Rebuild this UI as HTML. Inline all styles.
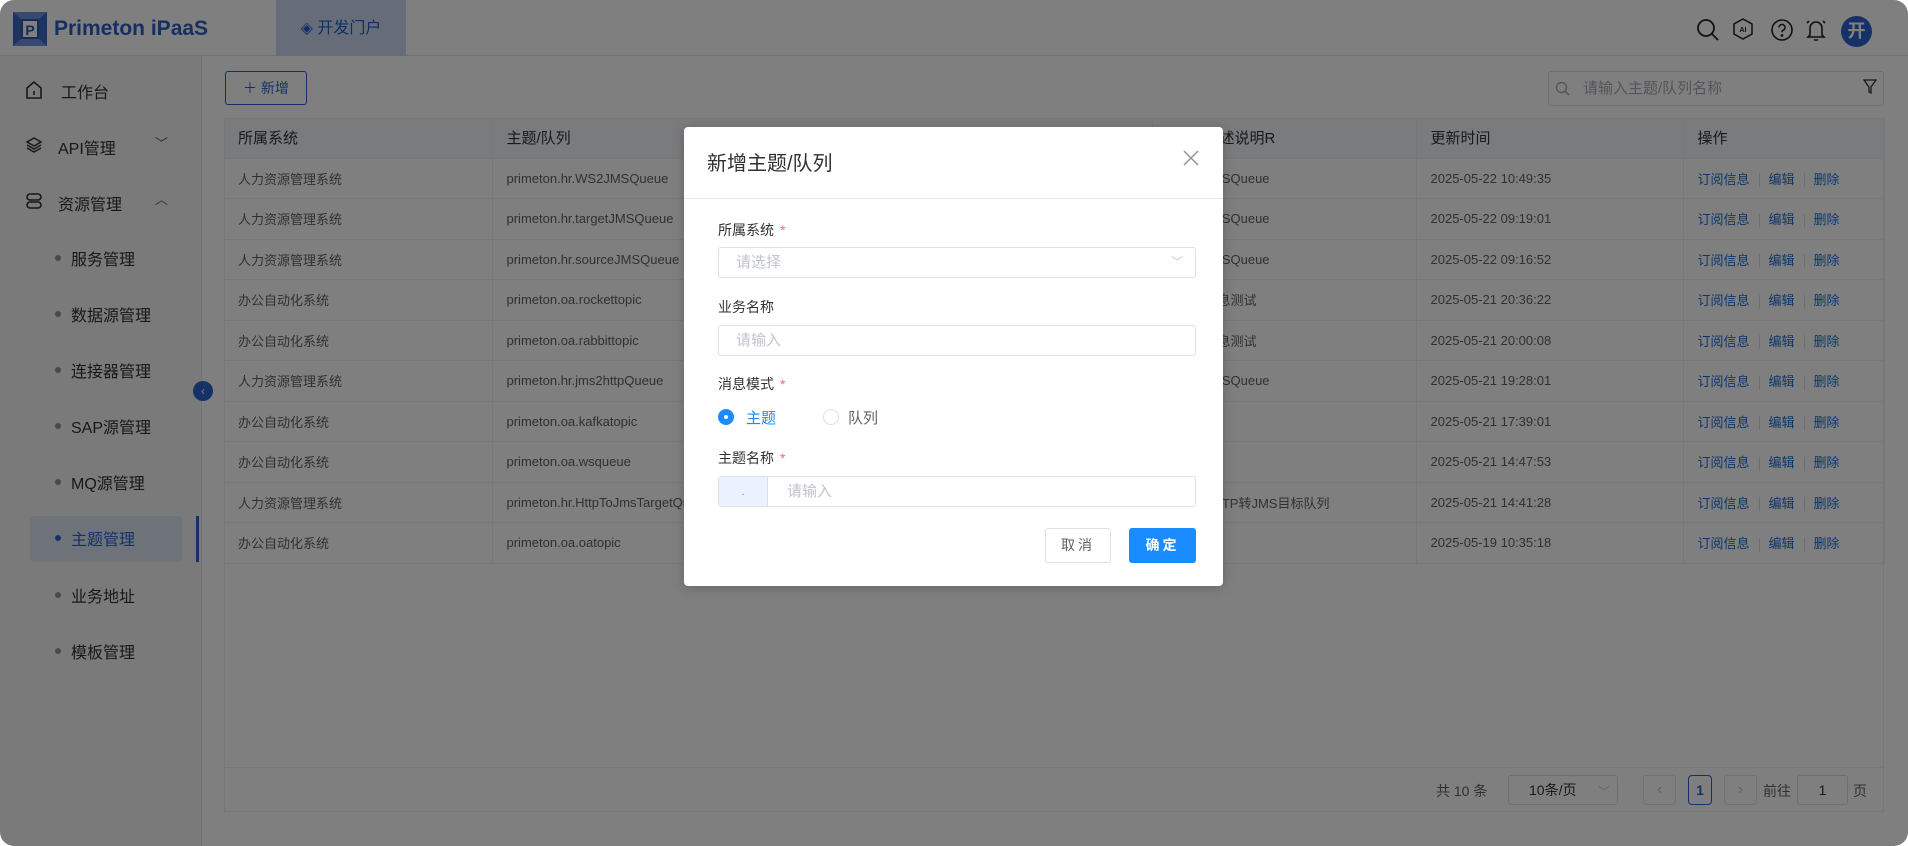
<!DOCTYPE html>
<html><head><meta charset="utf-8"><style>
*{box-sizing:border-box;margin:0;padding:0}
body{width:1908px;height:846px;background:#fff;font-family:"Liberation Sans","Noto Sans CJK SC",sans-serif;overflow:hidden;position:relative}
.page{position:absolute;left:0;top:0;width:1908px;height:846px;background:#fff;border-radius:14px;overflow:hidden}
.a{position:absolute}
.hdr{left:0;top:0;width:1908px;height:56px;background:#fff;border-bottom:1px solid #e4e7ed}
.side{left:0;top:56px;width:202px;height:790px;background:#f4f5f7;border-right:1px solid #e4e7ed}
.main{left:203px;top:56px;width:1705px;height:790px;background:#fff}
.ni{position:absolute;font-size:16px;color:#303133}
.sub{position:absolute;left:71px;font-size:16px;color:#303133}
.dot{position:absolute;left:55px;width:6px;height:6px;border-radius:3px;background:#909399}
table{position:absolute;left:224px;top:118px;border-collapse:collapse;font-size:13px;color:#606266;table-layout:fixed;width:1660px}
td,th{height:40.5px;border-bottom:1px solid #ebeef5;border-right:1px solid #ebeef5;text-align:left;padding-left:14px;font-weight:normal;white-space:nowrap;overflow:hidden}
td.c3{padding-left:52px}
th{height:40px;font-size:15px;color:#303133;background:#f5f7fa}
.lk{color:#1a6fd8}
.sep{display:inline-block;width:1px;height:14px;background:#dcdfe6;margin:0 9px;vertical-align:middle}
.ov{position:absolute;left:0;top:0;width:1908px;height:846px;background:rgba(0,0,0,.5);border-radius:14px}
.modal{position:absolute;left:684px;top:127px;width:539px;height:459px;background:#fff;border-radius:4px;box-shadow:0 2px 12px rgba(0,0,0,.2)}
.lbl{position:absolute;left:34px;font-size:14px;color:#303133}
.lbl i{color:#f56c6c;font-style:normal;margin-left:6px}
.inp{position:absolute;left:34px;width:478px;height:31px;border:1px solid #dcdfe6;border-radius:3px;font-size:15px;color:#c0c4cc;padding-left:17px;line-height:29px}
</style></head><body>
<div class="page">
<div class="a hdr">
  <svg class="a" style="left:12px;top:11px" width="36" height="36" viewBox="0 0 36 36"><rect x="1" y="1" width="34" height="34" fill="#3a66c4"/><polygon points="1,1 35,1 27,8 9,8" fill="#6f93dd"/><polygon points="1,35 35,35 27,28 9,28" fill="#6f93dd"/><rect x="9" y="8" width="18" height="20" fill="#2c56b0"/><rect x="11" y="10" width="14" height="16" fill="#fff"/><text x="18" y="24" font-size="14" font-weight="bold" fill="#2c56b0" text-anchor="middle" font-family="Liberation Sans">P</text></svg>
  <div class="a" style="left:54px;top:17px;font-size:21px;font-weight:bold;color:#2c5fc0">Primeton iPaaS</div>
  <div class="a" style="left:276px;top:0;width:130px;height:56px;background:#cedbf0;color:#1f5fc8;font-size:16px;line-height:58px;text-align:center">◈ 开发门户</div>
  <svg class="a" style="left:1696px;top:18px" width="24" height="24" viewBox="0 0 24 24" fill="none" stroke="#222" stroke-width="1.8"><circle cx="10" cy="10" r="8"/><path d="M16 16l6 6"/></svg>
  <svg class="a" style="left:1731px;top:17px" width="24" height="24" viewBox="0 0 24 24" fill="none" stroke="#222" stroke-width="1.5"><path d="M12 2l9 5v10l-9 5-9-5V7z"/><text x="12" y="15" font-size="7" font-weight="bold" fill="#222" stroke="none" text-anchor="middle" font-family="Liberation Sans">AI</text></svg>
  <svg class="a" style="left:1770px;top:18px" width="24" height="24" viewBox="0 0 24 24" fill="none" stroke="#222" stroke-width="1.6"><circle cx="12" cy="12" r="10"/><path d="M9 9.5a3 3 0 1 1 4 2.8c-.8.4-1 1-1 2"/><circle cx="12" cy="17.5" r=".6" fill="#222"/></svg>
  <svg class="a" style="left:1804px;top:17px" width="24" height="26" viewBox="0 0 24 26" fill="none" stroke="#222" stroke-width="1.6"><path d="M6 18V11a6 6 0 0 1 12 0v7l2 2H4z"/><path d="M10 23h4"/><path d="M3 6l2-2M21 6l-2-2"/></svg>
  <div class="a" style="left:1841px;top:16px;width:31px;height:31px;border-radius:50%;background:#2b63d0;color:#fff;font-size:18px;font-weight:bold;text-align:center;line-height:31px">开</div>
</div>
<div class="a side">
  <svg class="a" style="left:25px;top:24px" width="18" height="20" viewBox="0 0 18 20" fill="none" stroke="#303133" stroke-width="1.6"><path d="M2 8l7-6 7 6v10H2z"/><path d="M9 11v4"/></svg>
  <div class="ni" style="left:61px;top:23px">工作台</div>
  <svg class="a" style="left:25px;top:80px" width="18" height="18" viewBox="0 0 18 18" fill="none" stroke="#303133" stroke-width="1.5"><path d="M9 2l7 4-7 4-7-4z"/><path d="M2 9l7 4 7-4M2 12l7 4 7-4"/></svg>
  <div class="ni" style="left:58px;top:79px">API管理</div>
  <div class="a" style="left:155px;top:77px;color:#606266;font-size:13px">﹀</div>
  <svg class="a" style="left:25px;top:136px" width="18" height="18" viewBox="0 0 18 18" fill="none" stroke="#303133" stroke-width="1.6"><rect x="2" y="2" width="14" height="6" rx="3"/><rect x="2" y="10" width="14" height="6" rx="3"/></svg>
  <div class="ni" style="left:58px;top:135px">资源管理</div>
  <div class="a" style="left:155px;top:133px;color:#606266;font-size:13px">︿</div>
  <div class="dot" style="top:199px"></div><div class="sub" style="top:190px">服务管理</div>
  <div class="dot" style="top:255px"></div><div class="sub" style="top:246px">数据源管理</div>
  <div class="dot" style="top:311px"></div><div class="sub" style="top:302px">连接器管理</div>
  <div class="dot" style="top:367px"></div><div class="sub" style="top:358px">SAP源管理</div>
  <div class="dot" style="top:423px"></div><div class="sub" style="top:414px">MQ源管理</div>
  <div class="a" style="left:30px;top:460px;width:152px;height:46px;background:#dde6f4;border-radius:4px"></div>
  <div class="a" style="left:196px;top:460px;width:3px;height:46px;background:#2b63d0"></div>
  <div class="dot" style="top:479px;background:#2b63d0"></div><div class="sub" style="top:470px;color:#2b63d0">主题管理</div>
  <div class="dot" style="top:536px"></div><div class="sub" style="top:527px">业务地址</div>
  <div class="dot" style="top:592px"></div><div class="sub" style="top:583px">模板管理</div>
</div>
<div class="a main"></div>
<div class="a" style="left:193px;top:381px;width:20px;height:20px;border-radius:50%;background:#2b63d0;color:#fff;font-size:12px;text-align:center;line-height:20px">‹</div>
<div class="a" style="left:225px;top:71px;width:82px;height:34px;border:1px solid #2b63d0;border-radius:3px;color:#2b63d0;font-size:14px;text-align:center;line-height:32px">＋ 新增</div>
<div class="a" style="left:1548px;top:71px;width:336px;height:35px;border:1px solid #dcdfe6;border-radius:3px;color:#a8abb2;font-size:15px;line-height:33px;padding-left:34px">请输入主题/队列名称</div>
<svg class="a" style="left:1555px;top:81px" width="15" height="15" viewBox="0 0 15 15" fill="none" stroke="#a8abb2" stroke-width="1.4"><circle cx="6.5" cy="6.5" r="5"/><path d="M10 10l4 4"/></svg>
<svg class="a" style="left:1863px;top:79px" width="14" height="16" viewBox="0 0 14 16" fill="none" stroke="#303133" stroke-width="1.3"><path d="M1 1h12L8 8v6l-2-1V8z"/></svg>
<table>
<colgroup><col style="width:268px"><col style="width:660px"><col style="width:264px"><col style="width:267px"><col style="width:201px"></colgroup>
<tr><th>所属系统</th><th>主题/队列</th><th style="padding-left:52px">描述说明R</th><th>更新时间</th><th>操作</th></tr>
<tr><td>人力资源管理系统</td><td>primeton.hr.WS2JMSQueue</td><td class="c3">JMSQueue</td><td>2025-05-22 10:49:35</td><td class="lk">订阅信息<span class="sep"></span>编辑<span class="sep"></span>删除</td></tr>
<tr><td>人力资源管理系统</td><td>primeton.hr.targetJMSQueue</td><td class="c3">JMSQueue</td><td>2025-05-22 09:19:01</td><td class="lk">订阅信息<span class="sep"></span>编辑<span class="sep"></span>删除</td></tr>
<tr><td>人力资源管理系统</td><td>primeton.hr.sourceJMSQueue</td><td class="c3">JMSQueue</td><td>2025-05-22 09:16:52</td><td class="lk">订阅信息<span class="sep"></span>编辑<span class="sep"></span>删除</td></tr>
<tr><td>办公自动化系统</td><td>primeton.oa.rockettopic</td><td class="c3">消息测试</td><td>2025-05-21 20:36:22</td><td class="lk">订阅信息<span class="sep"></span>编辑<span class="sep"></span>删除</td></tr>
<tr><td>办公自动化系统</td><td>primeton.oa.rabbittopic</td><td class="c3">消息测试</td><td>2025-05-21 20:00:08</td><td class="lk">订阅信息<span class="sep"></span>编辑<span class="sep"></span>删除</td></tr>
<tr><td>人力资源管理系统</td><td>primeton.hr.jms2httpQueue</td><td class="c3">JMSQueue</td><td>2025-05-21 19:28:01</td><td class="lk">订阅信息<span class="sep"></span>编辑<span class="sep"></span>删除</td></tr>
<tr><td>办公自动化系统</td><td>primeton.oa.kafkatopic</td><td></td><td>2025-05-21 17:39:01</td><td class="lk">订阅信息<span class="sep"></span>编辑<span class="sep"></span>删除</td></tr>
<tr><td>办公自动化系统</td><td>primeton.oa.wsqueue</td><td></td><td>2025-05-21 14:47:53</td><td class="lk">订阅信息<span class="sep"></span>编辑<span class="sep"></span>删除</td></tr>
<tr><td>人力资源管理系统</td><td>primeton.hr.HttpToJmsTargetQueue</td><td class="c3">HTTP转JMS目标队列</td><td>2025-05-21 14:41:28</td><td class="lk">订阅信息<span class="sep"></span>编辑<span class="sep"></span>删除</td></tr>
<tr><td>办公自动化系统</td><td>primeton.oa.oatopic</td><td></td><td>2025-05-19 10:35:18</td><td class="lk">订阅信息<span class="sep"></span>编辑<span class="sep"></span>删除</td></tr>
</table>
<div class="a" style="left:224px;top:118px;width:1660px;height:694px;border:1px solid #ebeef5"></div>
<div class="a" style="left:224px;top:767px;width:1660px;height:1px;background:#ebeef5"></div>
<div class="a" style="left:1436px;top:781px;font-size:14px;color:#606266">共 10 条</div>
<div class="a" style="left:1508px;top:775px;width:110px;height:30px;border:1px solid #dcdfe6;border-radius:3px;font-size:14px;color:#303133;line-height:28px;padding-left:20px">10条/页 <span style="color:#c0c4cc;margin-left:18px;font-size:11px">﹀</span></div>
<div class="a" style="left:1643px;top:775px;width:33px;height:30px;border:1px solid #e4e7ed;border-radius:3px;color:#c0c4cc;text-align:center;line-height:28px">‹</div>
<div class="a" style="left:1688px;top:775px;width:24px;height:30px;border:1px solid #2b63d0;border-radius:4px;color:#2b63d0;text-align:center;line-height:28px;font-weight:bold;font-size:14px">1</div>
<div class="a" style="left:1724px;top:775px;width:33px;height:30px;border:1px solid #e4e7ed;border-radius:3px;color:#c0c4cc;text-align:center;line-height:28px">›</div>
<div class="a" style="left:1763px;top:781px;font-size:14px;color:#606266">前往</div>
<div class="a" style="left:1797px;top:775px;width:51px;height:30px;border:1px solid #dcdfe6;border-radius:3px;text-align:center;line-height:28px;font-size:14px;color:#303133">1</div>
<div class="a" style="left:1853px;top:781px;font-size:14px;color:#606266">页</div>
</div>
<div class="ov"></div>
<div class="modal">
  <div class="a" style="left:23px;top:20px;font-size:20px;color:#303133">新增主题/队列</div>
  <svg class="a" style="left:499px;top:23px" width="16" height="16" viewBox="0 0 16 16" stroke="#909399" stroke-width="1.5"><path d="M1 1l14 14M15 1L1 15"/></svg>
  <div class="a" style="left:0;top:71px;width:539px;height:1px;background:#e4e7ed"></div>
  <div class="lbl" style="top:93px">所属系统<i>*</i></div>
  <div class="inp" style="top:120px">请选择<span style="position:absolute;right:12px;top:0;font-size:12px">﹀</span></div>
  <div class="lbl" style="top:170px">业务名称</div>
  <div class="inp" style="top:198px">请输入</div>
  <div class="lbl" style="top:247px">消息模式<i>*</i></div>
  <div class="a" style="left:34px;top:282px;width:16px;height:16px;border-radius:50%;background:#1a8cff"></div>
  <div class="a" style="left:40px;top:288px;width:4px;height:4px;border-radius:50%;background:#fff"></div>
  <div class="a" style="left:62px;top:280px;font-size:15px;color:#1a8cff">主题</div>
  <div class="a" style="left:139px;top:282px;width:16px;height:16px;border-radius:50%;border:1px solid #dcdfe6"></div>
  <div class="a" style="left:164px;top:280px;font-size:15px;color:#606266">队列</div>
  <div class="lbl" style="top:321px">主题名称<i>*</i></div>
  <div class="inp" style="top:349px;padding-left:68px">请输入</div>
  <div class="a" style="left:35px;top:350px;width:49px;height:29px;background:#ecf2fd;border-right:1px solid #dcdfe6;text-align:center;color:#909399;line-height:29px;font-size:12px">.</div>
  <div class="a" style="left:361px;top:401px;width:66px;height:35px;border:1px solid #dcdfe6;border-radius:3px;text-align:center;line-height:33px;font-size:14px;color:#606266;letter-spacing:3px">取消</div>
  <div class="a" style="left:445px;top:401px;width:67px;height:35px;background:#1a8cff;border-radius:3px;text-align:center;line-height:35px;font-size:14px;color:#fff;font-weight:bold;letter-spacing:3px">确定</div>
</div>
</body></html>
